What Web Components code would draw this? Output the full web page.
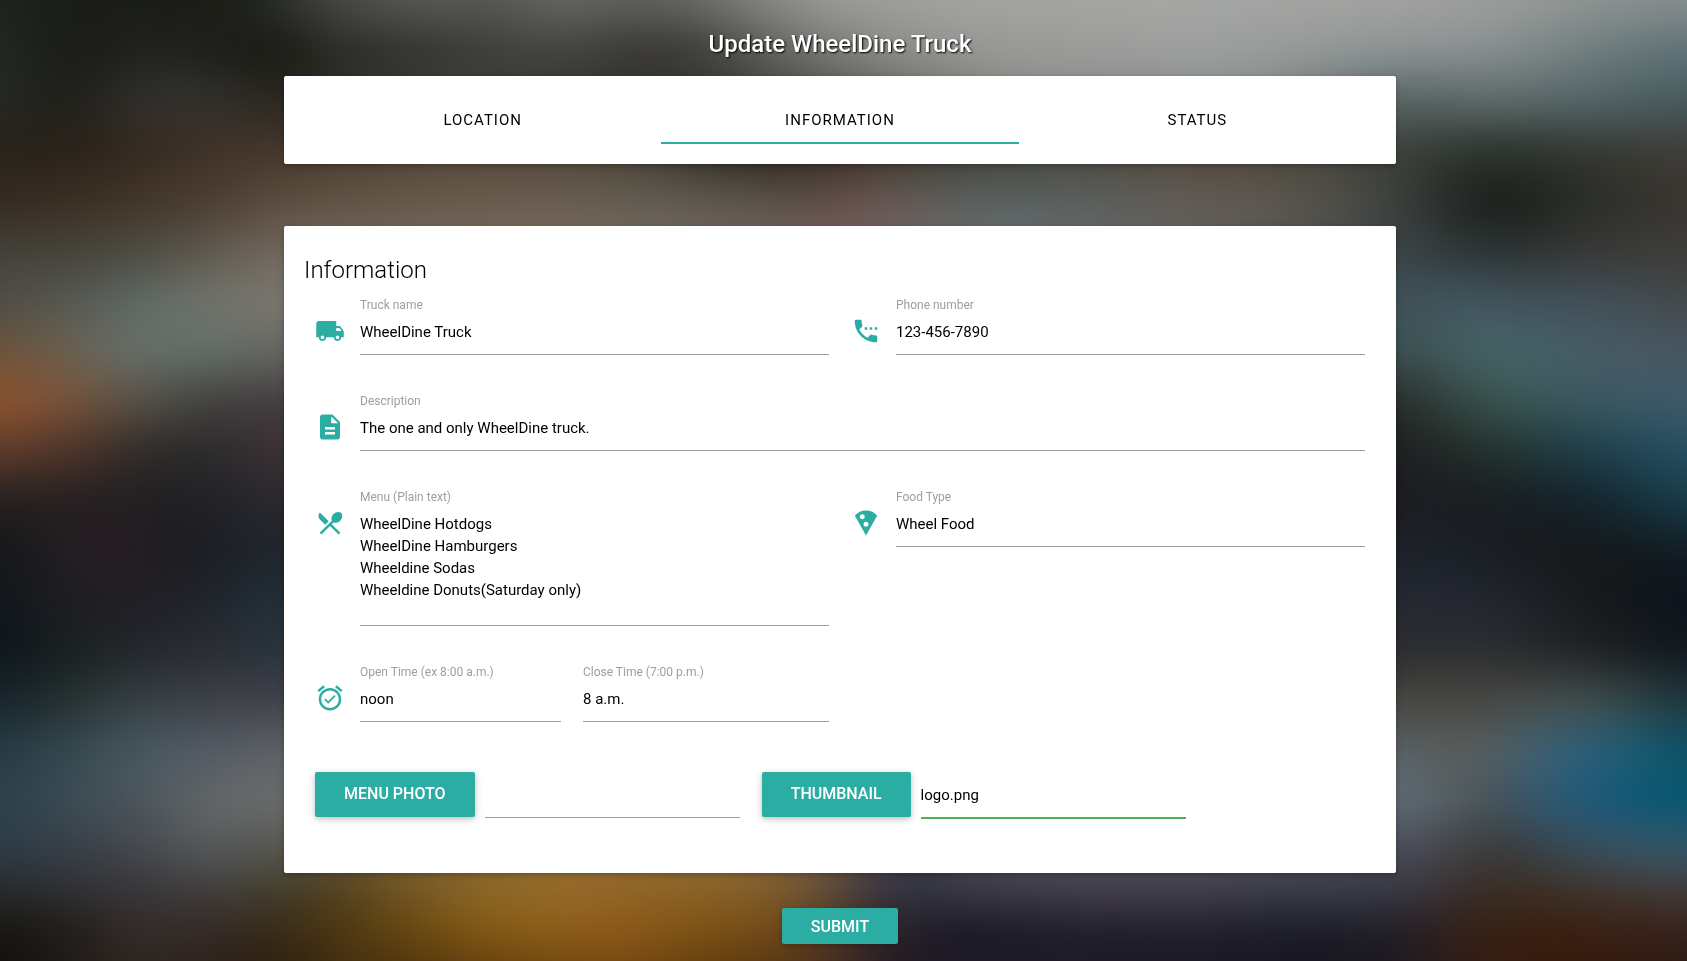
<!DOCTYPE html>
<html lang="en">
<head>
<meta charset="utf-8">
<meta name="viewport" content="width=device-width, initial-scale=1">
<title>Update WheelDine Truck</title>
<style>
  :root {
    --teal: #2bada4;
    --valid: #4caf50;
    --line: #9e9e9e;
    --gutter: 11px;
    --raised: 0 2px 5px rgba(0,0,0,.16), 0 2px 10px rgba(0,0,0,.12);
  }
  html { background: #222; }
  body { margin: 0; font-family: Roboto, "Liberation Sans", sans-serif; font-size: 15px; color: #000; }
</style>
</head>
<body>
<blurred-backdrop></blurred-backdrop>
<update-page></update-page>

<script>
const define = (name, html, setup) => {
  const template = document.createElement('template');
  template.innerHTML = html;
  customElements.define(name, class extends HTMLElement {
    constructor() {
      super();
      this.attachShadow({ mode: 'open' }).append(template.content.cloneNode(true));
    }
    connectedCallback() { if (setup) setup(this, this.shadowRoot); }
  });
};

/* Out-of-focus street scene: bands of colour, each "y: x colour, x colour ...", softened together. */
const scene = `
0: 0 1f2421, 70 191c16, 140 1a1c17, 210 171a12, 280 2a2d28, 340 4a4c48, 420 5a5a57, 500 555552, 560 6a6a67, 600 60605d, 680 62625f, 760 858583, 830 9b9b99, 960 a3a3a1, 1150 a5a7a5, 1390 a3a3a0, 1490 9c9e9d, 1590 8e9492, 1687 868d8e
50: 0 252a25, 70 161811, 140 232320, 210 1f201b, 280 14160f, 330 2b2c26, 420 32322e, 500 403f3b, 560 444440, 640 363530, 700 3a3934, 760 5a5a56, 830 7a7a76, 900 8e8d8a, 1000 999997, 1200 9ea09e, 1390 8e9495, 1490 8a9091, 1590 6f7d7d, 1687 5c7075
100: 0 262924, 70 1e1e19, 140 33312e, 210 33322e, 280 28241d, 440 45403c, 640 33312c, 800 4a4843, 1000 8a8683, 1250 858d90, 1400 54605f, 1490 5f6b6a, 1590 54656a, 1687 455a5c
150: 0 2a241b, 70 282017, 140 35291f, 210 403228, 280 46362b, 450 54473a, 600 50463a, 760 262218, 840 382d24, 1000 40433a, 1200 54493d, 1396 3b403b, 1490 2a312c, 1590 34382f, 1687 403d38
200: 0 33291e, 70 3b2d23, 140 43362b, 210 4b3c30, 280 5c4c3f, 420 66594a, 550 6b5d50, 650 615e53, 750 5a554c, 830 5d4b44, 870 705653, 920 5e5c57, 1000 5a6262, 1100 5b5f5d, 1200 625a53, 1300 5b564d, 1390 3f423f, 1490 141a15, 1590 2a2d27, 1687 3a3531
250: 0 44403a, 70 454236, 140 4b4a3f, 210 5f584e, 284 73695f, 550 7a6c60, 850 75605c, 1000 667072, 1200 66625e, 1396 3b4346, 1490 283030, 1590 383835, 1687 3e3d38
300: 0 4e4e46, 70 555852, 140 5e6a67, 210 72756c, 284 7d786f, 1396 40505a, 1470 435761, 1530 405059, 1590 41505a, 1687 42484a
350: 0 6a5038, 70 6c6252, 140 65716d, 210 63716a, 284 686660, 1396 3c4f50, 1490 47666a, 1590 465c66, 1640 495964, 1687 485661
400: 0 92552e, 50 825234, 100 69533f, 140 56534a, 210 40403c, 284 453c41, 1396 272a28, 1490 3a5650, 1590 3c5862, 1687 3f5a6a
450: 0 603d2a, 70 4e342a, 140 2f2a28, 210 29292a, 284 3f3238, 1396 1e1e21, 1490 24322c, 1590 1c3f4a, 1687 265063
500: 0 221f1e, 70 262022, 140 211e21, 210 212226, 284 2b2a2f, 1396 1b1b20, 1490 191d20, 1590 14222b, 1687 173f4c
550: 0 141619, 70 231f22, 100 2c2026, 140 231c20, 180 1a1a1e, 240 1d222b, 284 22272c, 1396 1e2129, 1450 1a212a, 1530 17191c, 1610 14181a, 1687 121c24
600: 0 10161a, 70 1e1e22, 140 221f27, 210 20242b, 284 21303a, 1396 252830, 1490 222732, 1590 16191b, 1687 0b131c
650: 0 0c151b, 70 1a2021, 140 22272c, 210 2b2c31, 284 27353f, 1396 2b2c2f, 1490 2c2d31, 1590 1f2022, 1687 0f171d
700: 0 15232b, 70 25302f, 140 374245, 210 3c3f47, 284 42414a, 1396 47463f, 1490 494843, 1590 43514f, 1687 1d353c
750: 0 263a44, 70 364850, 140 475962, 210 545b65, 284 5f6368, 1396 56636b, 1440 5c5c58, 1490 55605f, 1550 38607a, 1620 205f78, 1687 0a5266
800: 0 2b3f4b, 70 3c4c55, 140 4c555b, 210 646969, 284 6b6d6d, 1396 5f6e78, 1440 59656a, 1490 484e52, 1550 2f5a78, 1620 0f5878, 1687 03566f
850: 0 2c3c47, 70 373f48, 140 44484e, 210 595c5e, 284 54544e, 400 7a6236, 570 9a7236, 740 92703c, 830 7a6048, 900 353a4c, 1000 54505c, 1200 54505c, 1396 4a4c5c, 1440 48494f, 1490 383634, 1550 38464f, 1620 3a5465, 1687 33586a
890: 0 272a2c, 70 303032, 140 38353a, 210 403d3d, 284 403d2a, 330 4c3c18, 400 725424, 500 8f6a26, 570 96692a, 640 8e6324, 740 866028, 800 745632, 860 403a3f, 900 2c3040, 960 3c3a48, 1100 45424d, 1250 3f404d, 1396 363b48, 1440 3a3236, 1490 3a2b20, 1590 40342c, 1687 453c39
930: 0 161410, 70 211b18, 140 372e2a, 210 332927, 284 3a2a15, 330 4a3612, 400 64450f, 480 855b12, 560 8f5e18, 610 925a1a, 700 7f5312, 800 6f4718, 840 50382a, 900 241f28, 960 181624, 1060 1d1c28, 1200 1f1d28, 1300 1a1c26, 1396 1f1d26, 1440 301f1d, 1490 351f12, 1560 3a1f0e, 1687 36211c
970: 0 10110c, 140 2f2622, 284 2a1c0f, 330 3f2c10, 430 54360f, 520 6a4210, 620 744812, 700 603c0e, 800 523218, 850 3a2426, 900 1d1824, 1100 1f1b26, 1300 17151f, 1396 1a1620, 1450 331f18, 1560 381a0c, 1687 2c1a15`;

define('blurred-backdrop', `
<style>
  :host { position: fixed; inset: 0; z-index: -1; display: block; overflow: hidden; }
  #scene { width: 100%; height: 100%; }
  svg { display: block; width: 100%; height: 100%; }
</style>
<div id="scene"></div>`, (host, root) => {
  const bands = scene.trim().split('\n').map(row => {
    const [y, stops] = row.split(':');
    return { y: +y, stops: stops.split(',').map(s => s.trim().split(' ')) };
  });
  const edge = i => i <= 0 ? -90 : i >= bands.length ? 1060 : (bands[i - 1].y + bands[i].y) / 2;
  root.getElementById('scene').innerHTML = `
<svg viewBox="0 0 1687 961" preserveAspectRatio="none" aria-hidden="true">
  <defs>
    <filter id="soft" filterUnits="userSpaceOnUse" x="-90" y="-90" width="1870" height="1150" color-interpolation-filters="sRGB"><feGaussianBlur stdDeviation="30 22"/></filter>
    ${bands.map((b, i) => `<linearGradient id="b${i}" gradientUnits="userSpaceOnUse" x1="0" y1="0" x2="1687" y2="0">${b.stops.map(([x, c]) => `<stop offset="${x / 1687}" stop-color="#${c}"/>`).join('')}</linearGradient>`).join('')}
  </defs>
  <g filter="url(#soft)">
    ${bands.map((b, i) => `<rect x="-90" y="${edge(i)}" width="1870" height="${edge(i + 1) - edge(i) + 1}" fill="url(#b${i})"/>`).join('')}
  </g>
</svg>`;
});

define('surface-card', `
<style>
  :host { display: block; box-sizing: border-box; padding: 20px; background: #fff; border-radius: 2px; box-shadow: var(--raised); }
</style>
<slot></slot>`);

define('tab-strip', `
<style>
  :host { display: grid; grid-auto-flow: column; grid-auto-columns: 1fr; height: 48px; }
  ::slotted(a) { box-sizing: border-box; height: 48px; padding-top: 2px; line-height: 44px; text-align: center; text-transform: uppercase;
    letter-spacing: 1px; color: #000; text-decoration: none; border-bottom: 2px solid transparent; }
  ::slotted(a[aria-current]) { border-bottom-color: var(--teal); }
</style>
<slot></slot>`);

const icons = {
  truck: 'M20 8h-3V4H3c-1.1 0-2 .9-2 2v11h2c0 1.66 1.34 3 3 3s3-1.34 3-3h6c0 1.66 1.34 3 3 3s3-1.34 3-3h2v-5l-3-4zM6 18.5c-.83 0-1.5-.67-1.5-1.5s.67-1.5 1.5-1.5 1.5.67 1.5 1.5-.67 1.5-1.5 1.5zm13.5-9l1.96 2.5H17V9.5h2.5zm-1.5 9c-.83 0-1.5-.67-1.5-1.5s.67-1.5 1.5-1.5 1.5.67 1.5 1.5-.67 1.5-1.5 1.5z',
  phone: 'M13 9h-2v2h2V9zm4 0h-2v2h2V9zm3 6.5c-1.25 0-2.45-.2-3.57-.57-.35-.11-.74-.03-1.02.24l-2.2 2.2c-2.83-1.44-5.15-3.75-6.59-6.58l2.2-2.21c.28-.27.36-.66.25-1.01C8.7 6.45 8.5 5.25 8.5 4c0-.55-.45-1-1-1H4c-.55 0-1 .45-1 1 0 9.39 7.61 17 17 17 .55 0 1-.45 1-1v-3.5c0-.55-.45-1-1-1zM19 9v2h2V9h-2z',
  document: 'M14 2H6c-1.1 0-1.99.9-1.99 2L4 20c0 1.1.89 2 1.99 2H18c1.1 0 2-.9 2-2V8l-6-6zm2 16H8v-2h8v2zm0-4H8v-2h8v2zm-3-5V3.5L18.5 9H13z',
  cutlery: 'M8.1 13.34l2.83-2.83L3.91 3.5c-1.56 1.56-1.56 4.09 0 5.66l4.19 4.18zm6.78-1.81c1.53.71 3.68.21 5.27-1.38 1.91-1.91 2.28-4.65.81-6.12-1.46-1.46-4.2-1.1-6.12.81-1.59 1.59-2.09 3.74-1.38 5.27L3.7 19.87l1.41 1.41L12 14.41l6.88 6.88 1.41-1.41L13.41 13l1.47-1.47z',
  pizza: 'M12 2C8.43 2 5.23 3.54 3.01 6L12 22l8.99-16C18.78 3.55 15.57 2 12 2zM7 7c0-1.1.9-2 2-2s2 .9 2 2-.9 2-2 2-2-.9-2-2zm5 8c-1.1 0-2-.9-2-2s.9-2 2-2 2 .9 2 2-.9 2-2 2z',
  alarm: 'M22 5.72l-4.6-3.86-1.29 1.53 4.6 3.86L22 5.72zM7.88 3.39L6.6 1.86 2 5.71l1.29 1.53 4.59-3.85zM12 4c-4.97 0-9 4.03-9 9s4.02 9 9 9c4.97 0 9-4.03 9-9s-4.03-9-9-9zm0 16c-3.87 0-7-3.13-7-7s3.13-7 7-7 7 3.13 7 7-3.13 7-7 7zm-1.46-5.47L8.41 12.4l-1.06 1.06 3.18 3.18 6-6-1.06-1.06-4.93 4.95z'
};

/* Text field with a small label above and an optional icon in front. */
define('text-field', `
<style>
  :host { display: flex; gap: 15px; min-width: 0; padding: 0 var(--gutter); }
  svg { flex: none; width: 30px; height: 30px; margin-top: 19px; fill: var(--teal); }
  svg:not([data-icon]) { display: none; }
  div { flex: 1; min-width: 0; display: flex; flex-direction: column; }
  label { height: 16px; line-height: 16px; font-size: 12px; color: var(--line); }
  input, textarea { box-sizing: border-box; width: 100%; margin: 0; border: 0; border-bottom: 1px solid var(--line); border-radius: 0;
    background: none; outline: 0; font: inherit; color: inherit; }
  input { height: 42px; padding: 0 0 4px; }
  textarea { display: block; padding: 8px 0 24px; line-height: 22px; resize: none; overflow: hidden; }
</style>
<svg viewBox="0 0 24 24" aria-hidden="true"><path/></svg>
<div><label for="control"></label></div>`, (host, root) => {
  const icon = host.getAttribute('icon');
  if (icon) {
    root.querySelector('svg').dataset.icon = icon;
    root.querySelector('path').setAttribute('d', icons[icon]);
  }
  root.querySelector('label').textContent = host.getAttribute('label');
  const text = host.textContent.trim();
  const control = document.createElement(host.hasAttribute('multiline') ? 'textarea' : 'input');
  control.id = 'control';
  if (control.rows) control.rows = text.split('\n').length;
  control.value = text;
  root.querySelector('div').append(control);
});

define('raised-button', `
<style>
  :host { display: inline-block; flex: none; }
  button { display: block; height: 36px; margin: 0; padding: 0 29px; border: 0; border-radius: 2px; background: var(--teal); color: #fff;
    font: inherit; font-size: 16px; font-weight: 500; text-transform: uppercase; white-space: nowrap; cursor: pointer; box-shadow: var(--raised); }
  :host([tall]) button { height: 45px; padding-bottom: 2px; }
</style>
<button type="button"><slot></slot></button>`);

define('file-field', `
<style>
  :host { display: flex; align-items: flex-start; gap: 10px; min-width: 0; padding: 0 var(--gutter); }
  input { flex: 1; min-width: 0; box-sizing: border-box; height: 46px; margin: 0; padding: 0; border: 0; border-bottom: 1px solid var(--line);
    border-radius: 0; background: none; outline: 0; font: inherit; color: inherit; }
  :host([valid]) input { height: 47px; border-bottom: 2px solid var(--valid); }
</style>
<raised-button tall><slot></slot></raised-button>
<input type="text" readonly>`, (host, root) => {
  const input = root.querySelector('input');
  input.value = host.getAttribute('file') || '';
  input.setAttribute('aria-label', host.textContent.trim());
});

define('field-grid', `
<style>
  :host { display: grid; grid-template-columns: repeat(12, minmax(0, 1fr)); row-gap: 38px; align-items: start; }
  ::slotted([span="3"]) { grid-column: span 3; }
  ::slotted([span="5"]) { grid-column: span 5; }
  ::slotted([span="6"]) { grid-column: span 6; }
  ::slotted([span="12"]) { grid-column: span 12; }
</style>
<slot></slot>`);

define('update-page', `
<style>
  :host { display: block; padding: 30px 7px 17px 0; }
  main { box-sizing: border-box; width: 70%; margin: 0 auto; padding: 0 32px; }
  h1 { margin: 0 0 18px; font-size: 24px; line-height: 28px; font-weight: 500; text-align: center; color: #fff; text-shadow: 1px 1px 2px #000; }
  h2 { margin: 10px 0 13px; font-size: 24px; line-height: 28px; font-weight: 300; }
  nav { margin-bottom: 62px; }
  .info { padding-bottom: 54px; }
  .files { margin-top: 50px; }
  .actions { display: flex; justify-content: center; margin-top: 35px; }
</style>
<main>
  <h1>Update WheelDine Truck</h1>
  <nav>
    <surface-card>
      <tab-strip>
        <a href="#location">Location</a>
        <a href="#information" aria-current="page">Information</a>
        <a href="#status">Status</a>
      </tab-strip>
    </surface-card>
  </nav>
  <form>
    <surface-card class="info">
      <h2>Information</h2>
      <field-grid>
        <text-field span="6" icon="truck" label="Truck name">WheelDine Truck</text-field>
        <text-field span="6" icon="phone" label="Phone number">123-456-7890</text-field>
        <text-field span="12" icon="document" label="Description">The one and only WheelDine truck.</text-field>
        <text-field span="6" icon="cutlery" label="Menu (Plain text)" multiline>WheelDine Hotdogs
WheelDine Hamburgers
Wheeldine Sodas
Wheeldine Donuts(Saturday only)</text-field>
        <text-field span="6" icon="pizza" label="Food Type">Wheel Food</text-field>
        <text-field span="3" icon="alarm" label="Open Time (ex 8:00 a.m.)">noon</text-field>
        <text-field span="3" label="Close Time (7:00 p.m.)">8 a.m.</text-field>
      </field-grid>
      <field-grid class="files">
        <file-field span="5">Menu Photo</file-field>
        <file-field span="5" file="logo.png" valid>Thumbnail</file-field>
      </field-grid>
    </surface-card>
    <div class="actions"><raised-button>Submit</raised-button></div>
  </form>
</main>`);
</script>
</body>
</html>
